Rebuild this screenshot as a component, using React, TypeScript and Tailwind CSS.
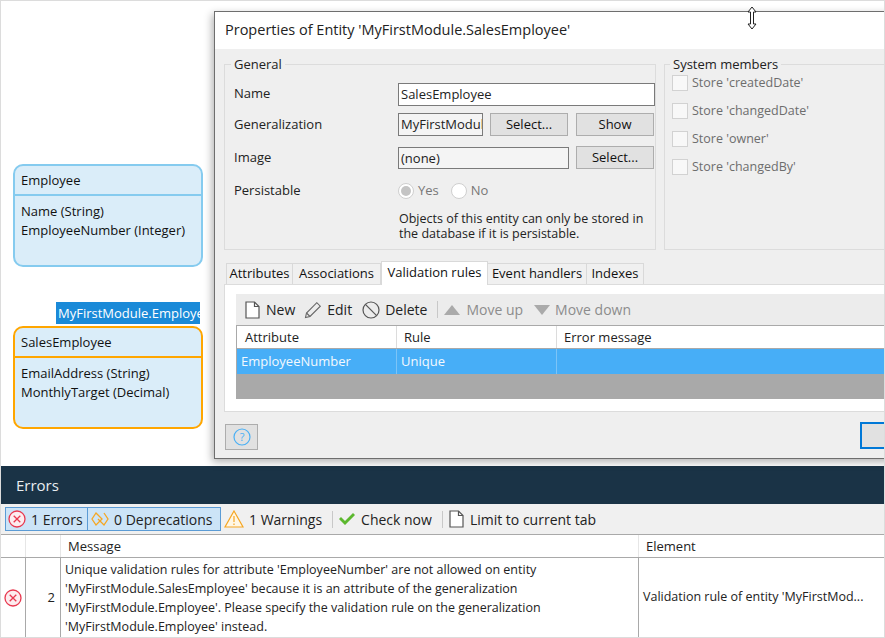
const font = { fontFamily: '"Open Sans", "Noto Sans", sans-serif' };

function Entity({ title, attrs, color, top }: { title: string; attrs: string[]; color: string; top: string }) {
  return (
    <div className={`absolute left-[12px] w-[190px] h-[103px] rounded-[10px] border-[2px] bg-[#daedf9] text-[13px] text-[#111] ${color} ${top}`}>
      <div className={`h-[30px] border-b-[2px] pl-[6px] pt-[5px] leading-[18px] ${color}`}>{title}</div>
      <div className="pl-[6px] pt-[6px] leading-[18.5px]">
        {attrs.map((a) => (
          <div key={a}>{a}</div>
        ))}
      </div>
    </div>
  );
}

function Btn({ label, w }: { label: string; w: string }) {
  return (
    <div className={`h-[23px] ${w} flex items-center justify-center border border-[#adadad] bg-[#e1e1e1] text-[13px] text-[#111]`}>{label}</div>
  );
}

function PageIcon({ className = "" }: { className?: string }) {
  return (
    <svg width="15" height="18" viewBox="0 0 15 18" className={className} fill="none" stroke="#555" strokeWidth="1.2">
      <path d="M1 1h8.5L14 5.5V17H1z" fill="#fff" />
      <path d="M9.5 1v4.5H14" />
    </svg>
  );
}

function ErrIcon({ size = 18 }: { size?: number }) {
  return (
    <svg width={size} height={size} viewBox="0 0 18 18" fill="none" stroke="#e8384f" strokeWidth="1.3" className="shrink-0">
      <circle cx="9" cy="9" r="8" fill="#fdecef" />
      <path d="M5.7 5.7l6.6 6.6M12.3 5.7l-6.6 6.6" />
    </svg>
  );
}

function Check({ label }: { label: string }) {
  return (
    <div className="flex items-center h-[28px] gap-[4px] text-[12.5px] text-[#6d6d6d]">
      <div className="w-[16px] h-[16px] bg-[#f8f8f8] border border-[#d2d2d2]" />
      <span>{label}</span>
    </div>
  );
}

function Row({ label, children, h }: { label: string; children: React.ReactNode; h: string }) {
  return (
    <div className={`flex items-center ${h}`}>
      <div className="w-[164px] text-[13px] text-[#222]">{label}</div>
      {children}
    </div>
  );
}

function Tab({ label, w, active }: { label: string; w: string; active?: boolean }) {
  return active ? (
    <div className={`${w} h-[24px] -mt-[2px] flex items-start pt-[1px] justify-center border border-b-0 border-[#d9d9d9] bg-white text-[13px] text-[#111] relative z-10 -mb-px`}>{label}</div>
  ) : (
    <div className={`${w} h-[21px] flex items-center justify-center border border-b-0 border-l-0 first:border-l border-[#d9d9d9] bg-[#f0f0f0] text-[13px] text-[#111]`}>{label}</div>
  );
}

export default function App() {
  return (
    <div style={font} className="w-[885px] h-[638px] flex flex-col overflow-hidden bg-white border-l border-t border-r border-b border-[#dcdcdc]">
      <div className="relative h-[465px] shrink-0">
        <Entity title="Employee" attrs={["Name (String)", "EmployeeNumber (Integer)"]} color="border-[#85cbef]" top="top-[163px]" />
        <div className="absolute top-[301px] left-[55px] w-[144px] h-[22px] bg-[#1a8ad8] text-white text-[13px] leading-[22px] pl-[2px] whitespace-nowrap">MyFirstModule.Employee</div>
        <Entity title="SalesEmployee" attrs={["EmailAddress (String)", "MonthlyTarget (Decimal)"]} color="border-[#ffa600]" top="top-[325px]" />

        {/* Dialog */}
        <div className="absolute left-[213px] top-[10px] w-[680px] h-[448px] border-t border-b border-l border-[#6e6e6e] bg-[#efefef] shadow-[-2px_3px_8px_rgba(0,0,0,0.3)]">
          <div className="h-[37px] bg-white pl-[10px] pt-[8px] text-[14.5px] leading-[20px] text-[#222]">Properties of Entity 'MyFirstModule.SalesEmployee'</div>
          <div className="flex gap-[8px] pl-[9px] pt-[15px]">
            <div className="relative w-[438px] h-[186px] border border-[#dcdcdc] pl-[9px] pt-[13px]">
              <div className="absolute -top-[10px] left-[6px] bg-[#efefef] px-[3px] text-[13px] leading-[18px] text-[#222]">General</div>
              <Row label="Name" h="h-[32px]">
                <div className="w-[257px] h-[23px] border border-[#7a7a7a] bg-white text-[13px] leading-[21px] pl-[2px] text-[#222]">SalesEmployee</div>
              </Row>
              <Row label="Generalization" h="h-[29px]">
                <div className="w-[85px] h-[23px] border border-[#7a7a7a] bg-[#f4f4f4] text-[13px] leading-[21px] pl-[2px] text-[#222] overflow-hidden whitespace-nowrap">MyFirstModul</div>
                <Btn label="Select..." w="w-[78px] ml-[7px]" />
                <Btn label="Show" w="w-[78px] ml-[8px]" />
              </Row>
              <Row label="Image" h="h-[37px]">
                <div className="w-[171px] h-[22px] border border-[#7a7a7a] bg-[#f4f4f4] text-[13px] leading-[20px] pl-[2px] text-[#222]">(none)</div>
                <Btn label="Select..." w="w-[78px] ml-[7px]" />
              </Row>
              <Row label="Persistable" h="h-[29px]">
                <div className="flex items-center text-[13px] text-[#777]">
                  <div className="w-[16px] h-[16px] rounded-full border border-[#cfcfcf] bg-white flex items-center justify-center"><div className="w-[10px] h-[10px] rounded-full bg-[#c4c4c4]" /></div>
                  <span className="ml-[4px]">Yes</span>
                  <div className="w-[16px] h-[16px] rounded-full border border-[#cfcfcf] bg-white ml-[12px]" />
                  <span className="ml-[4px]">No</span>
                </div>
              </Row>
              <div className="pl-[165px] pt-[6px] text-[12.5px] leading-[15px] text-[#222] whitespace-nowrap">
                Objects of this entity can only be stored in<br />the database if it is persistable.
              </div>
            </div>
            <div className="relative w-[240px] h-[186px] border border-[#dcdcdc] pl-[7px] pt-[4px]">
              <div className="absolute -top-[10px] left-[5px] bg-[#efefef] px-[3px] text-[13px] leading-[18px] text-[#222]">System members</div>
              <Check label="Store 'createdDate'" />
              <Check label="Store 'changedDate'" />
              <Check label="Store 'owner'" />
              <Check label="Store 'changedBy'" />
            </div>
          </div>
          <div className="pl-[9px] pt-[13px]">
            <div className="flex pl-[2px] h-[21px] items-end">
              <Tab label="Attributes" w="w-[67px]" />
              <Tab label="Associations" w="w-[88px]" />
              <Tab label="Validation rules" w="w-[107px]" active />
              <Tab label="Event handlers" w="w-[99px]" />
              <Tab label="Indexes" w="w-[57px]" />
            </div>
            <div className="h-[128px] border border-[#dcdcdc] bg-white pl-[11px] pt-[9px]">
              <div className="flex items-center h-[31px] bg-[#ececec] text-[14px] text-[#222] pl-[9px]">
                <PageIcon />
                <span className="ml-[6px]">New</span>
                <svg width="18" height="18" viewBox="0 0 18 18" fill="none" stroke="#666" strokeWidth="1.1" className="ml-[9px]"><path d="M1.5 16.5l1-4.5L12.8 1.7l3.5 3.5L6 15.5z" /><path d="M2.5 12l3.5 3.5" /></svg>
                <span className="ml-[5px]">Edit</span>
                <svg width="18" height="18" viewBox="0 0 18 18" fill="none" stroke="#555" strokeWidth="1.2" className="ml-[10px]"><circle cx="9" cy="9" r="8" /><path d="M3.4 3.4l11.2 11.2" /></svg>
                <span className="ml-[5px]">Delete</span>
                <div className="w-px h-[17px] bg-[#c8c8c8] ml-[10px]" />
                <svg width="18" height="10" viewBox="0 0 18 10" className="ml-[5px]"><path d="M9 0l8 10H1z" fill="#aaa" /></svg>
                <span className="ml-[5px] text-[#8c8c8c]">Move up</span>
                <svg width="18" height="10" viewBox="0 0 18 10" className="ml-[10px]"><path d="M9 10L1 0h16z" fill="#aaa" /></svg>
                <span className="ml-[4px] text-[#8c8c8c]">Move down</span>
              </div>
              <div className="border-t border-[#a9a9a9] border-l border-[#a9a9a9]">
                <div className="flex h-[23px] text-[13px] text-[#222] border-b border-[#a9a9a9]">
                  <div className="w-[160px] pl-[8px] leading-[22px] border-r border-[#dcdcdc]">Attribute</div>
                  <div className="w-[160px] pl-[7px] leading-[22px] border-r border-[#dcdcdc]">Rule</div>
                  <div className="pl-[7px] leading-[22px]">Error message</div>
                </div>
                <div className="flex h-[25px] bg-[#47aef7] text-[13px] text-[#f3f9fe]">
                  <div className="w-[160px] pl-[4px] leading-[25px] border-r border-[#7cc4f7]">EmployeeNumber</div>
                  <div className="w-[160px] pl-[4px] leading-[25px] border-r border-[#7cc4f7]">Unique</div>
                </div>
                <div className="h-[25px] bg-[#a9a9a9]" />
              </div>
            </div>
            <div className="flex items-center justify-between h-[48px] pt-[1px]">
              <div className="ml-[1px] w-[33px] h-[26px] border border-[#adadad] bg-[#e1e1e1] flex items-center justify-center">
                <svg width="18" height="18" viewBox="0 0 18 18" fill="none" stroke="#4ab0f5" strokeWidth="1.2"><circle cx="9" cy="9" r="8" /><text x="9" y="13" textAnchor="middle" fontSize="11" fill="#4ab0f5" stroke="none">?</text></svg>
              </div>
              <div className="absolute left-[645px] top-[410px] w-[40px] h-[27px] border-2 border-[#0078d7] bg-[#e1e1e1]" />
            </div>
          </div>
        </div>

        {/* Resize cursor */}
        <svg width="12" height="24" viewBox="0 0 12 24" className="absolute left-[745px] top-[5px]" fill="#fff" stroke="#222" strokeWidth="1">
          <path d="M6 1L10 6H7.5V18H10L6 23 2 18H4.5V6H2z" />
        </svg>
      </div>

      {/* Errors panel */}
      <div className="h-[38px] shrink-0 bg-[#1a3346] text-[#e8edf0] text-[15px] leading-[38px] pl-[15px]">Errors</div>
      <div className="h-[31px] shrink-0 bg-[#f0f0f0] flex items-center text-[14px] text-[#222] border-b border-[#a9a9a9] pl-[4px]">
        <div className="flex items-center h-[24px] w-[83px] pl-[2px] gap-[5px] bg-[#cce4f7] border border-[#5b9bd5]">
          <ErrIcon /><span>1 Errors</span>
        </div>
        <div className="flex items-center h-[24px] w-[134px] -ml-px pl-[3px] gap-[5px] bg-[#cce4f7] border border-[#5b9bd5]">
          <svg width="18" height="18" viewBox="0 0 18 18" fill="none" stroke="#f5a623" strokeWidth="1.3" className="shrink-0"><path d="M5 3l6 6-6 6-4-6zM13 3l4 6-4 6-6-6" /></svg>
          <span>0 Deprecations</span>
        </div>
        <svg width="20" height="18" viewBox="0 0 20 18" fill="none" stroke="#f5a623" strokeWidth="1.2" className="ml-[3px]"><path d="M10 1l9 16H1z" fill="#fff7e6" /><path d="M10 6v6M10 13.5v1.5" /></svg>
        <span className="ml-[5px]">1 Warnings</span>
        <div className="w-px h-[17px] bg-[#c8c8c8] ml-[10px]" />
        <svg width="18" height="14" viewBox="0 0 18 14" className="ml-[5px]"><path d="M1 7l2-2 4 4 8-8 2 2L7 13z" fill="#5cb82e" /></svg>
        <span className="ml-[5px]">Check now</span>
        <div className="w-px h-[17px] bg-[#c8c8c8] ml-[10px]" />
        <PageIcon className="ml-[6px]" />
        <span className="ml-[6px]">Limit to current tab</span>
      </div>
      <div className="flex h-[23px] shrink-0 text-[13px] text-[#222] border-b border-[#a9a9a9]">
        <div className="w-[25px] border-r border-[#e6e6e6]" />
        <div className="w-[35px] border-r border-[#e6e6e6]" />
        <div className="w-[578px] pl-[7px] leading-[23px] border-r border-[#e6e6e6]">Message</div>
        <div className="pl-[7px] leading-[23px]">Element</div>
      </div>
      <div className="flex flex-1 text-[12.5px] text-[#222]">
        <div className="w-[25px] flex items-center justify-center border-r border-[#a9a9a9]"><ErrIcon /></div>
        <div className="w-[35px] flex items-center justify-end pr-[5px] text-[13px] border-r border-[#a9a9a9]">2</div>
        <div className="w-[578px] pl-[4px] pt-[2px] leading-[19px] border-r border-[#a9a9a9] whitespace-nowrap">
          Unique validation rules for attribute 'EmployeeNumber' are not allowed on entity<br />
          'MyFirstModule.SalesEmployee' because it is an attribute of the generalization<br />
          'MyFirstModule.Employee'. Please specify the validation rule on the generalization<br />
          'MyFirstModule.Employee' instead.
        </div>
        <div className="flex-1 flex items-center pl-[4px] whitespace-nowrap">Validation rule of entity 'MyFirstMod...</div>
      </div>
    </div>
  );
}
